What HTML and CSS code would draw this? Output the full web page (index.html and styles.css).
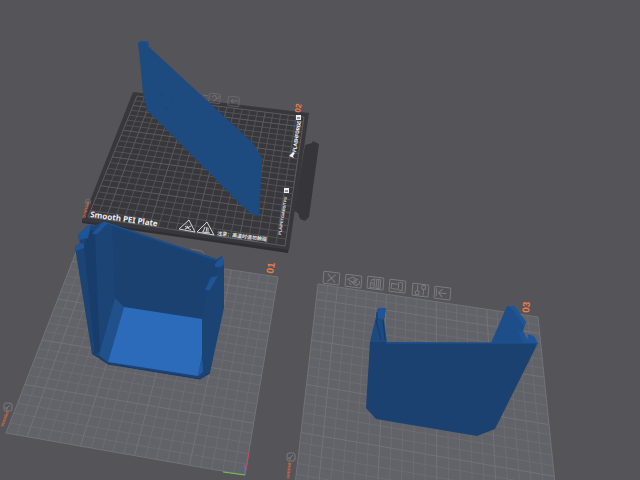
FILE: index.html
```html
<!DOCTYPE html>
<html lang="en">
<head>
<meta charset="utf-8">
<meta name="viewport" content="width=device-width, initial-scale=1">
<title>Build plates</title>
<link rel="stylesheet" href="styles.css">
</head>
<body>
<main class="viewport">
<svg class="scene" viewBox="0 0 640 480" preserveAspectRatio="xMidYMid slice" role="img" aria-label="Three build plates with models">
  <defs>
    <symbol id="frame" viewBox="0 0 16 14"><rect x="1" y="1" width="14" height="12" rx="1"/></symbol>
    <symbol id="edit" viewBox="0 0 10 10"><rect x="1" y="1" width="8" height="8" rx="2"/><path d="M3 7 7 3M3 5v2h2"/></symbol>
  </defs>

  <!-- Plate 1 -->
  <g class="plate">
    <polygon class="bed" points="78,247 278,277 245,475 6,433"/>
    <g class="grid" data-corners="78,247 278,277 245,475 6,433"></g>
    <path class="axis-x" d="M245 475 223 472"/>
    <path class="axis-y" d="M246 470 249 452"/>
    <path class="axis-z" d="M245 475V465"/>
  </g>

  <!-- Plate 2 -->
  <g class="plate">
    <polygon class="lug" points="305,145 312,143 313,141 319,144 309,217 305,221 300,219 298,213 294,211"/>
    <polygon class="sheet-side" points="82,219 289,248 288,253 82,223"/>
    <polygon class="sheet" points="133,92 309,113 289,250 82,221"/>
    <g class="grid grid-dark" data-corners="137,96 304,117 285,246 88,217"></g>
    <g class="icon faint">
      <use href="#frame" transform="matrix(1 .12 -.08 1 208 92)" width="14" height="11"/>
      <use href="#frame" transform="matrix(1 .12 -.08 1 227 95)" width="14" height="11"/>
      <path d="M212 97l3-2 2 4 3-3M213 101l5-3M238 101h-7m2-2-2 2 2 2M203 95l5 1M201 100l6 1"/>
      <path d="M191 249l11 2 2 3"/>
    </g>
    <text class="sheet-name" transform="translate(90 217) rotate(8)">Smooth PEI Plate</text>
    <text class="brand" transform="translate(296 152) rotate(-81)">FLASHFORGE</text>
    <path class="mark" d="M289 156l4-4 2 1-2 3 1 2z"/>
    <g class="badge"><rect x="296" y="115" width="5" height="5"/><rect x="284" y="188" width="5" height="5"/></g>
    <path class="badge-cut" d="M297 118h3M285 191h3"/>
    <text class="materials" transform="translate(281 235) rotate(-81)">PLA/PETG/ABS/TPU</text>
    <g class="warning">
      <path d="M189 220 179 229 195 232ZM207 222 197 232 214 235Z"/>
      <path d="M185 226l6 4m0-4-6 3m2-3 2 2M203 232l2-5m1 5 1-5m1 6v-5M202 232l8 1"/>
    </g>
    <text class="caution" transform="translate(217 235) rotate(7)">注意：高温时请勿触碰</text>
    <text class="caution-small" transform="translate(217 237) rotate(7)">Caution: hot surface, do not touch the plate</text>
    <text class="number" transform="translate(300 113) rotate(-80)">02</text>
    <text class="plate-name" transform="translate(85 218) rotate(-74)">Untitled</text>
    <use class="icon" href="#edit" x="85" y="199" width="6" height="6"/>
  </g>

  <!-- Plate 3 -->
  <g class="plate">
    <polygon class="bed" points="318,284 538,317 560,533 295,485"/>
    <g class="grid" data-corners="318,284 538,317 560,533 295,485"></g>
  </g>

  <g class="labels">
    <text class="number number-near" transform="translate(273 274) rotate(-80)">01</text>
    <text class="number number-near" transform="translate(529 313) rotate(-85)">03</text>
    <text class="plate-name" transform="translate(3 427) rotate(-70)">Untitled</text>
    <text class="plate-name" transform="translate(289 479) rotate(-84)">Untitled</text>
    <use class="icon" href="#edit" x="3" y="402" width="10" height="10"/>
    <use class="icon" href="#edit" x="286" y="452" width="10" height="10"/>
  </g>

  <!-- Plate 3 actions -->
  <g class="actions">
    <foreignObject width="18" height="14" transform="matrix(1 .13 -.08 1 323 270)"><button class="action" aria-label="Delete all"><svg class="icon" viewBox="0 0 18 14"><rect x="1" y="1" width="16" height="12" rx="1"/><path d="M5 3l8 8M13 3 5 11"/></svg></button></foreignObject>
    <foreignObject width="18" height="14" transform="matrix(1 .13 -.08 1 345 273)"><button class="action" aria-label="Orient"><svg class="icon" viewBox="0 0 18 14"><rect x="1" y="1" width="16" height="12" rx="1"/><path d="M3 6l5-3 5 2-5 3zM7 8l5 3 3-2V6M9 5l3 3-4 1M5 9l2 2"/></svg></button></foreignObject>
    <foreignObject width="18" height="14" transform="matrix(1 .13 -.08 1 367 275)"><button class="action" aria-label="Arrange"><svg class="icon" viewBox="0 0 18 14"><rect x="1" y="1" width="16" height="12" rx="1"/><path d="M4 7h4v5H4zM10 3h4v9h-4zM4 5l4-2v3M12 3v9M5 9h2"/></svg></button></foreignObject>
    <foreignObject width="18" height="14" transform="matrix(1 .13 -.08 1 389 278)"><button class="action" aria-label="Lock"><svg class="icon" viewBox="0 0 18 14"><rect x="1" y="1" width="16" height="12" rx="1"/><path d="M9 5H3v5h6M11 3h3v8h-3M10 3v8"/></svg></button></foreignObject>
    <foreignObject width="18" height="14" transform="matrix(1 .13 -.08 1 412 282)"><button class="action" aria-label="Settings"><svg class="icon" viewBox="0 0 18 14"><rect x="1" y="1" width="16" height="12" rx="1"/><path d="M6 2v6M12 6v6"/><circle cx="6" cy="10" r="2"/><circle cx="12" cy="4" r="2"/></svg></button></foreignObject>
    <foreignObject width="18" height="14" transform="matrix(1 .13 -.08 1 434 285)"><button class="action" aria-label="Move to front"><svg class="icon" viewBox="0 0 18 14"><rect x="1" y="1" width="16" height="12" rx="1"/><path d="M3 3v8M13 7H5M9 3 5 7l4 4"/></svg></button></foreignObject>
  </g>

  <!-- Model on plate 2 -->
  <g class="model">
    <polygon class="panel" points="138,43 140,41 148,41 149,47 253,143 262,158 260,200 259,216 253,215 243,207 177,140 147,110 143,93 140,60"/>
    <path class="edge-light" d="M139 43l2-2 7 1M148 42v5"/>
    <path class="scratch" d="M161 94l2 3M166 107l1 4M171 98l2 1"/>
  </g>

  <!-- Model on plate 1 -->
  <g class="model">
    <polygon class="side" points="75,247 80,243 78,235 88,225 92,225 94,227 103,222 112,224 217,259 222,256 224,263 224,308 210,373 200,379 108,364 92,354"/>
    <polygon class="front" points="110,227 217,262 217,278 206,290 202,319 124,307 115,298 113,250"/>
    <polygon class="inner" points="88,228 103,222 112,226 115,298 100,352"/>
    <polygon class="shade" points="84,246 90,229 96,234 110,320 99,352 95,354"/>
    <polygon class="left-wall" points="95,235 104,223 110,229 115,298 100,354"/>
    <polygon class="chamfer" points="115,298 124,307 108,362 99,355"/>
    <polygon class="floor" points="124,307 202,319 202,356 198,376 108,362"/>
    <polygon class="corner" points="202,356 203,372 198,376"/>
    <polygon class="rim" points="75,247 80,243 84,244 84,248 76,251"/>
    <polygon class="rim" points="78,235 88,225 91,225 88,238 79,240"/>
    <polygon class="rim" points="92,234 103,222 108,223 97,234"/>
    <polygon class="rim" points="215,264 222,256 224,264 221,267 215,267"/>
    <polygon class="rim" points="211,277 218,276 210,290 205,290"/>
    <path class="edge-light" d="M104 222l9 3 104 35"/>
    <path class="edge-dark" d="M92 353l16 11 92 15 10-6"/>
  </g>

  <!-- Model on plate 3 -->
  <g class="model">
    <polygon class="panel" points="370,342 378,308 386,308 384,320 387,343 380,350"/>
    <polygon class="rim" points="377,311 378,308 386,308 384,319 377,318"/>
    <path class="edge-dark" d="M376 320l5 20M383 320l2 20M377 312v9"/>
    <polygon class="tower" points="491,343 507,306 514,306 526,322 523,331 529,343"/>
    <polygon class="rim" points="507,306 514,306 526,322 524,326 512,309"/>
    <polygon class="rim" points="518,332 523,331 529,343 524,343"/>
    <polygon class="rim" points="527,343 528,334 534,336 538,343"/>
    <polygon class="front" points="370,342 538,343 495,429 477,436 376,419 366,408"/>
    <path class="edge-light" d="M386 343H537l-2 6"/>
  </g>
</svg>
</main>
<script src="scene.js"></script>
</body>
</html>
```
FILE: styles.css
```css
body {
  margin: 0;
  background: #555459;
}

.viewport {
  height: 100vh;
  overflow: hidden;
}

.scene {
  display: block;
  width: 100%;
  height: 100%;
  font-family: "Open Sans", "Noto Sans", "Noto Sans CJK SC", sans-serif;
}

/* Plates */
.bed { fill: #626368; }
.sheet { fill: #38383c; }
.sheet-side { fill: #2f2f33; }
.lug { fill: #35353a; }

.grid path {
  fill: none;
  stroke: #727378;
  stroke-width: 1;
  opacity: 0.6;
}
.grid .major { opacity: 1; }
.grid-dark path { stroke: #5c5c60; opacity: 0.7; }

.axis-x, .axis-y, .axis-z { fill: none; stroke-width: 1; }
.axis-x { stroke: #7cc142; }
.axis-y { stroke: #c9475c; }
.axis-z { stroke: #4a7fc4; }

/* Printed texts */
.sheet-name { fill: #ececec; font-family: "Noto Sans", sans-serif; font-size: 8px; font-weight: 700; }
.brand { fill: #fff; font-family: Roboto, sans-serif; font-size: 5px; font-weight: 700; }
.materials { fill: #e4e4e4; font-family: "Liberation Sans", sans-serif; font-size: 4px; font-weight: 700; }
.caution { fill: #e0e0e0; font-family: "Noto Sans CJK SC", sans-serif; font-size: 5px; font-weight: 700; }
.caution-small { fill: #a0a0a0; font-size: 2px; }
.badge { fill: #ededed; }
.badge-cut { stroke: #38383c; }
.mark { fill: #f0f0f0; }
.warning path { fill: none; stroke: #d0d0d0; stroke-width: 1; }

.number { fill: #f07c4a; font-family: "Liberation Sans", sans-serif; font-size: 8px; font-weight: 700; }
.number-near { font-size: 10px; }
.plate-name { fill: #e0693c; font-size: 4px; font-weight: 700; }

/* Icons */
.icon { fill: none; stroke: #7b7b80; stroke-width: 1; }
.faint { opacity: 0.7; }

.action {
  display: block;
  width: 100%;
  height: 100%;
  padding: 0;
  border: 0;
  background: none;
}
.action .icon { display: block; width: 100%; height: 100%; }

/* Models */
.panel { fill: #1d4a7f; }
.front { fill: #1b4171; }
.side { fill: #1b4374; }
.inner { fill: #1c4679; }
.left-wall { fill: #1c4475; }
.shade { fill: #193d6a; }
.chamfer { fill: #21518a; }
.floor { fill: #2b6bba; }
.corner { fill: #245a9d; }
.tower { fill: #1e4e88; }
.rim { fill: #1e5597; }
.edge-light { fill: none; stroke: #1e5597; stroke-width: 1; }
.edge-dark { fill: none; stroke: #17396a; stroke-width: 1; }
.scratch { fill: none; stroke: #1b4475; stroke-width: 1; }
```
FILE: scene.js
```js
// Draws a 22 x 22 grid in perspective inside each plate's four corners
// (top left, top right, bottom right, bottom left).
const CELLS = 22;

function projector([a, b, c, d]) {
  const dx1 = b[0] - c[0], dx2 = d[0] - c[0], sx = a[0] - b[0] + c[0] - d[0];
  const dy1 = b[1] - c[1], dy2 = d[1] - c[1], sy = a[1] - b[1] + c[1] - d[1];
  const det = dx1 * dy2 - dx2 * dy1;
  const g = (sx * dy2 - dx2 * sy) / det;
  const h = (dx1 * sy - sx * dy1) / det;
  return (u, v) => {
    const w = g * u + h * v + 1;
    const x = ((b[0] - a[0] + g * b[0]) * u + (d[0] - a[0] + h * d[0]) * v + a[0]) / w;
    const y = ((b[1] - a[1] + g * b[1]) * u + (d[1] - a[1] + h * d[1]) * v + a[1]) / w;
    return x.toFixed(2) + " " + y.toFixed(2);
  };
}

document.querySelectorAll(".grid").forEach((grid) => {
  const corners = grid.dataset.corners.split(" ").map((p) => p.split(",").map(Number));
  const at = projector(corners);
  for (let i = 0; i <= CELLS; i++) {
    const t = i / CELLS;
    const major = i === 0 || i === CELLS || i % 5 === 2;
    for (const line of [[at(t, 0), at(t, 1)], [at(0, t), at(1, t)]]) {
      const path = document.createElementNS("http://www.w3.org/2000/svg", "path");
      path.setAttribute("d", "M" + line[0] + "L" + line[1]);
      if (major) path.setAttribute("class", "major");
      grid.appendChild(path);
    }
  }
});
```
